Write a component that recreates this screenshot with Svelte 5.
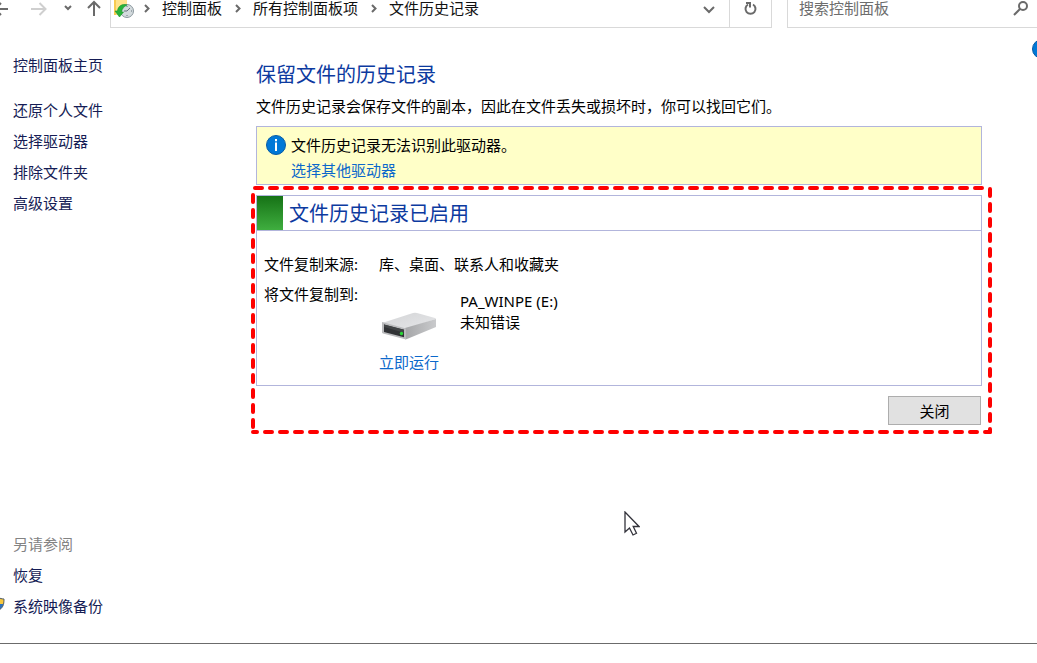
<script lang="ts">
  const crumbs = ['控制面板', '所有控制面板项', '文件历史记录'];
  const tasks = ['还原个人文件', '选择驱动器', '排除文件夹', '高级设置'];

  let search = $state('');
</script>

<div class="window">
  <header class="toolbar">
    <nav class="arrows" aria-label="导航">
      <button class="back" aria-label="后退">
        <svg width="16" height="16" viewBox="0 0 16 16"><path d="M15 9H2M8 3L2 9l6 6" /></svg>
      </button>
      <button class="forward" aria-label="前进">
        <svg width="16" height="16" viewBox="0 0 16 16"><path d="M0 9h14M8.500 3l6 6-6 6" /></svg>
      </button>
      <button class="recent" aria-label="最近位置">
        <svg width="8" height="16" viewBox="0 0 8 16"><path d="M1 6l3 3 3-3" /></svg>
      </button>
      <button class="up" aria-label="上移">
        <svg width="14" height="16" viewBox="0 0 14 16"><path d="M7 16V2M1 8l6-6 6 6" /></svg>
      </button>
    </nav>

    <div class="address">
      <svg class="folder" width="21" height="18" viewBox="0 0 21 18">
        <path d="M0 0h13v15H0z" fill="#ffe28a" />
        <path d="M0 0h2v15H0z" fill="#f7cb52" />
        <circle cx="13" cy="11" r="6.500" fill="#d3dadd" stroke="#8a979d" />
        <path d="M13 11l3-3M13 11h-3M13 6v1M18 11h-1M13 15v1" stroke="#65747c" fill="none" />
        <path d="M1 11l4.500 6 4-5H7.500C8 8.500 10 6.500 13 5 8 3.500 4 6 3.500 11z" fill="#28b33a" stroke="#169329" stroke-width=".6" />
      </svg>
      {#each crumbs as crumb}
        <svg class="sep" width="6" height="16" viewBox="0 0 6 16"><path d="M1 5l3.500 3.500L1 12" /></svg>
        <a href="#top">{crumb}</a>
      {/each}
      <button class="drop" aria-label="以前的位置">
        <svg width="12" height="16" viewBox="0 0 12 16"><path d="M1 7l5 5 5-5" /></svg>
      </button>
      <button class="refresh" aria-label="刷新">
        <svg width="14" height="16" viewBox="0 0 14 16"><path d="M9 4.500a5 5 0 1 1-5 0M2 3h4v4.500" /></svg>
      </button>
    </div>

    <label class="search">
      <input type="text" placeholder="搜索控制面板" aria-label="搜索控制面板" bind:value={search} />
      <svg width="16" height="16" viewBox="0 0 16 16"><circle cx="10" cy="6" r="4" /><path d="M7 9l-6 6" /></svg>
    </label>
  </header>

  <button class="help" aria-label="帮助"></button>

  <div class="body">
    <aside>
      <a class="home" href="#home">控制面板主页</a>
      {#each tasks as task}
        <a href="#task">{task}</a>
      {/each}
      <div class="also">
        <h2>另请参阅</h2>
        <a href="#recovery">恢复</a>
        <a href="#backup">
          <svg class="shield" width="15" height="16" viewBox="0 0 15 16">
            <path d="M7.500 1C10 2.500 12 3 14 3c0 6-1 9-6.500 12C2 12 1 9 1 3c2 0 4-.5 6.500-2z" fill="#2e72bd" />
            <path d="M7.500 1C10 2.500 12 3 14 3v5H7.500z" fill="#f8c83d" />
            <path d="M7.500 1C10 2.500 12 3 14 3c0 6-1 9-6.500 12C2 12 1 9 1 3c2 0 4-.5 6.500-2z" fill="none" stroke="#555f68" />
          </svg>
          系统映像备份
        </a>
      </div>
    </aside>

    <main>
      <h1>保留文件的历史记录</h1>
      <p class="intro">文件历史记录会保存文件的副本，因此在文件丢失或损坏时，你可以找回它们。</p>

      <div class="notice">
        <svg width="20" height="20" viewBox="0 0 20 20">
          <circle cx="10" cy="10" r="9.500" fill="#0078d7" stroke="#075ba5" />
          <path d="M9 4h2v2.200H9zM9 7.500h2V16H9z" fill="#fff" />
        </svg>
        <div>
          <p>文件历史记录无法识别此驱动器。</p>
          <a href="#drive">选择其他驱动器</a>
        </div>
      </div>

      <section class="status">
        <!-- dashed callout around the status card and its button -->
        <svg class="callout" aria-hidden="true">
          <line x1="2" y1="0" x2="99%" y2="0" />
          <line x1="100%" y1="1" x2="100%" y2="100%" />
          <line class="side" x1="0" y1="0" x2="0" y2="100%" />
          <line class="base" x1="0" y1="100%" x2="100%" y2="100%" />
        </svg>

        <div class="card">
          <div class="card-head">
            <span class="flag"></span>
            <h2>文件历史记录已启用</h2>
          </div>
          <dl>
            <dt>文件复制来源:</dt>
            <dd>库、桌面、联系人和收藏夹</dd>
            <dt>将文件复制到:</dt>
            <dd>
              <div class="target">
                <svg width="60" height="34" viewBox="0 0 60 34">
                  <defs>
                    <linearGradient id="top" x1="0" y1="0" x2="1" y2="1">
                      <stop offset="0" stop-color="#d3d4d6" />
                      <stop offset="1" stop-color="#e6e7e9" />
                    </linearGradient>
                    <linearGradient id="edge" x1="0" y1="0" x2="1" y2="0">
                      <stop offset="0" stop-color="#a5a6a8" />
                      <stop offset="1" stop-color="#c9cacc" />
                    </linearGradient>
                  </defs>
                  <path d="M3 14L34 4q2-.5 4 0l18 5q1 .5 1 1L26 20z" fill="url(#top)" />
                  <path d="M26 19l31-9v8L28 30q-1 .5-2 .3z" fill="url(#edge)" />
                  <path d="M3 13l24 6.500v11L4 24.500q-1-.3-1-1z" fill="#babbbd" />
                  <path d="M5 15.500l20 5.300v7.500L5 23z" fill="#303235" />
                  <path d="M5 15.500l20 5.300v3L5 18z" fill="#414446" />
                  <circle cx="22.500" cy="24.500" r="1.700" fill="#29d735" />
                </svg>
                <div>
                  <p>PA_WINPE (E:)</p>
                  <p>未知错误</p>
                </div>
              </div>
              <a href="#run">立即运行</a>
            </dd>
          </dl>
        </div>

        <div class="actions">
          <button class="close">关闭</button>
        </div>
      </section>
    </main>
  </div>

  <svg class="cursor" width="16" height="26" viewBox="0 0 16 26" aria-hidden="true">
    <path d="M1 1v20l4.500-4 3.500 7 3.500-1.700L9.200 15.500H15z" />
  </svg>
</div>

<style>
  :global(body) {
    margin: 0;
    background: #fff;
  }
  .window {
    position: relative;
    display: flex;
    flex-direction: column;
    box-sizing: border-box;
    min-height: calc(100vh - 19px);
    border-bottom: 1px solid #6b6b6b;
    overflow: hidden;
    font: 15px/20px 'Noto Sans', 'Noto Sans CJK SC', sans-serif;
    color: #000;
  }
  h1, h2, p, dl, dd {
    margin: 0;
  }
  a {
    color: #0b68cb;
    text-decoration: none;
  }
  button {
    padding: 0;
    border: 0;
    background: none;
    font: inherit;
  }
  svg {
    display: block;
    flex: none;
  }

  /* toolbar */
  .toolbar {
    display: flex;
    height: 28px;
    font-family: 'Liberation Sans', 'Noto Sans CJK SC', sans-serif;
  }
  .toolbar svg {
    fill: none;
    stroke: #6a6a6a;
    stroke-width: 2;
  }
  .arrows {
    display: flex;
    align-items: flex-start;
    width: 110px;
    flex: none;
  }
  .back {
    margin-left: -7px;
  }
  .forward {
    margin-left: 22px;
  }
  .forward svg {
    stroke: #cfcfcf;
  }
  .recent {
    margin-left: 17px;
  }
  .up {
    margin-left: 15px;
  }
  .address {
    display: flex;
    align-items: flex-start;
    flex: 1;
    border: 1px solid #d9d9d9;
    border-top: 0;
  }
  .toolbar .folder {
    margin-left: 3px;
    stroke: none;
    stroke-width: 1;
  }
  .sep {
    margin: 0 12px 0 9px;
  }
  .address a {
    line-height: 17px;
    color: #111;
  }
  .address a + .sep {
    margin-left: 13px;
  }
  .drop {
    margin-left: auto;
    margin-right: 14px;
  }
  .refresh {
    display: flex;
    justify-content: center;
    align-self: stretch;
    width: 42px;
    border-left: 1px solid #d9d9d9;
  }
  .search {
    display: flex;
    align-items: flex-start;
    box-sizing: border-box;
    width: 250px;
    margin-left: 15px;
    padding: 0 8px 0 11px;
    border: 1px solid #d9d9d9;
    border-width: 0 0 1px 1px;
  }
  .search input {
    flex: 1;
    min-width: 0;
    height: 18px;
    padding: 0;
    border: 0;
    outline: 0;
    background: none;
    font: inherit;
    line-height: 18px;
  }
  .search input::placeholder {
    color: #6d6d6d;
    opacity: 1;
  }
  .help {
    position: absolute;
    top: 39px;
    right: -15px;
    width: 20px;
    height: 20px;
    border: 1px solid #075ba5;
    border-radius: 50%;
    background: #0078d7;
  }

  /* side links */
  .body {
    display: flex;
    flex: 1;
  }
  aside {
    display: flex;
    flex-direction: column;
    align-items: flex-start;
    gap: 11px;
    box-sizing: border-box;
    width: 256px;
    flex: none;
    padding: 27px 13px;
  }
  aside a {
    color: #151c55;
  }
  .home {
    margin-bottom: 14px;
  }
  .also {
    display: flex;
    flex-direction: column;
    gap: 11px;
    margin-top: auto;
  }
  .also h2 {
    font: inherit;
    color: #838383;
  }
  .also a {
    position: relative;
  }
  .shield {
    position: absolute;
    top: 0;
    left: -23px;
  }

  /* content */
  main {
    flex: 1;
    min-width: 0;
    padding: 33px 55px 0 0;
  }
  h1, .card h2 {
    font-size: 20px;
    font-weight: 400;
    line-height: 28px;
    color: #0c3a9f;
  }
  .intro {
    margin: 7px 0 10px;
  }
  .notice {
    display: flex;
    gap: 5px;
    padding: 8px 9px 4px;
    border: 1px solid #b2b5dc;
    background: #ffffc8;
  }
  .notice p {
    margin-bottom: 5px;
  }
  .status {
    position: relative;
    padding-top: 10px;
  }
  .callout {
    position: absolute;
    top: 3px;
    left: -3px;
    width: calc(100% + 11px);
    height: 100%;
    overflow: visible;
    pointer-events: none;
    stroke: #fe0000;
    stroke-width: 4;
    stroke-linecap: round;
    stroke-dasharray: 7 8;
  }
  .side {
    stroke-dashoffset: 8;
  }
  .base {
    stroke-dashoffset: 3;
  }
  .card {
    border: 1px solid #b2b5dc;
  }
  .card-head {
    display: flex;
    align-items: center;
    gap: 6px;
    height: 34px;
    border-bottom: 1px solid #b2b5dc;
  }
  .flag {
    align-self: stretch;
    width: 26px;
    background: linear-gradient(#167216, #3fae3f);
  }
  .card h2 {
    padding-top: 2px;
  }
  dl {
    display: grid;
    grid-template-columns: 115px 1fr;
    row-gap: 10px;
    padding: 23px 7px 13px;
  }
  .target {
    display: flex;
    gap: 21px;
    margin-bottom: 9px;
    padding-top: 7px;
  }
  .target svg {
    margin-top: 18px;
  }
  .target p {
    line-height: 21px;
  }
  .actions {
    display: flex;
    justify-content: flex-end;
    padding: 10px 1px 4px 0;
  }
  .close {
    width: 93px;
    height: 29px;
    border: 1px solid #adadad;
    background: #e1e1e1;
  }

  .cursor {
    position: absolute;
    top: 511px;
    left: 624px;
    fill: #fff;
    stroke: #33333b;
    stroke-width: 1.3;
    pointer-events: none;
  }
</style>
